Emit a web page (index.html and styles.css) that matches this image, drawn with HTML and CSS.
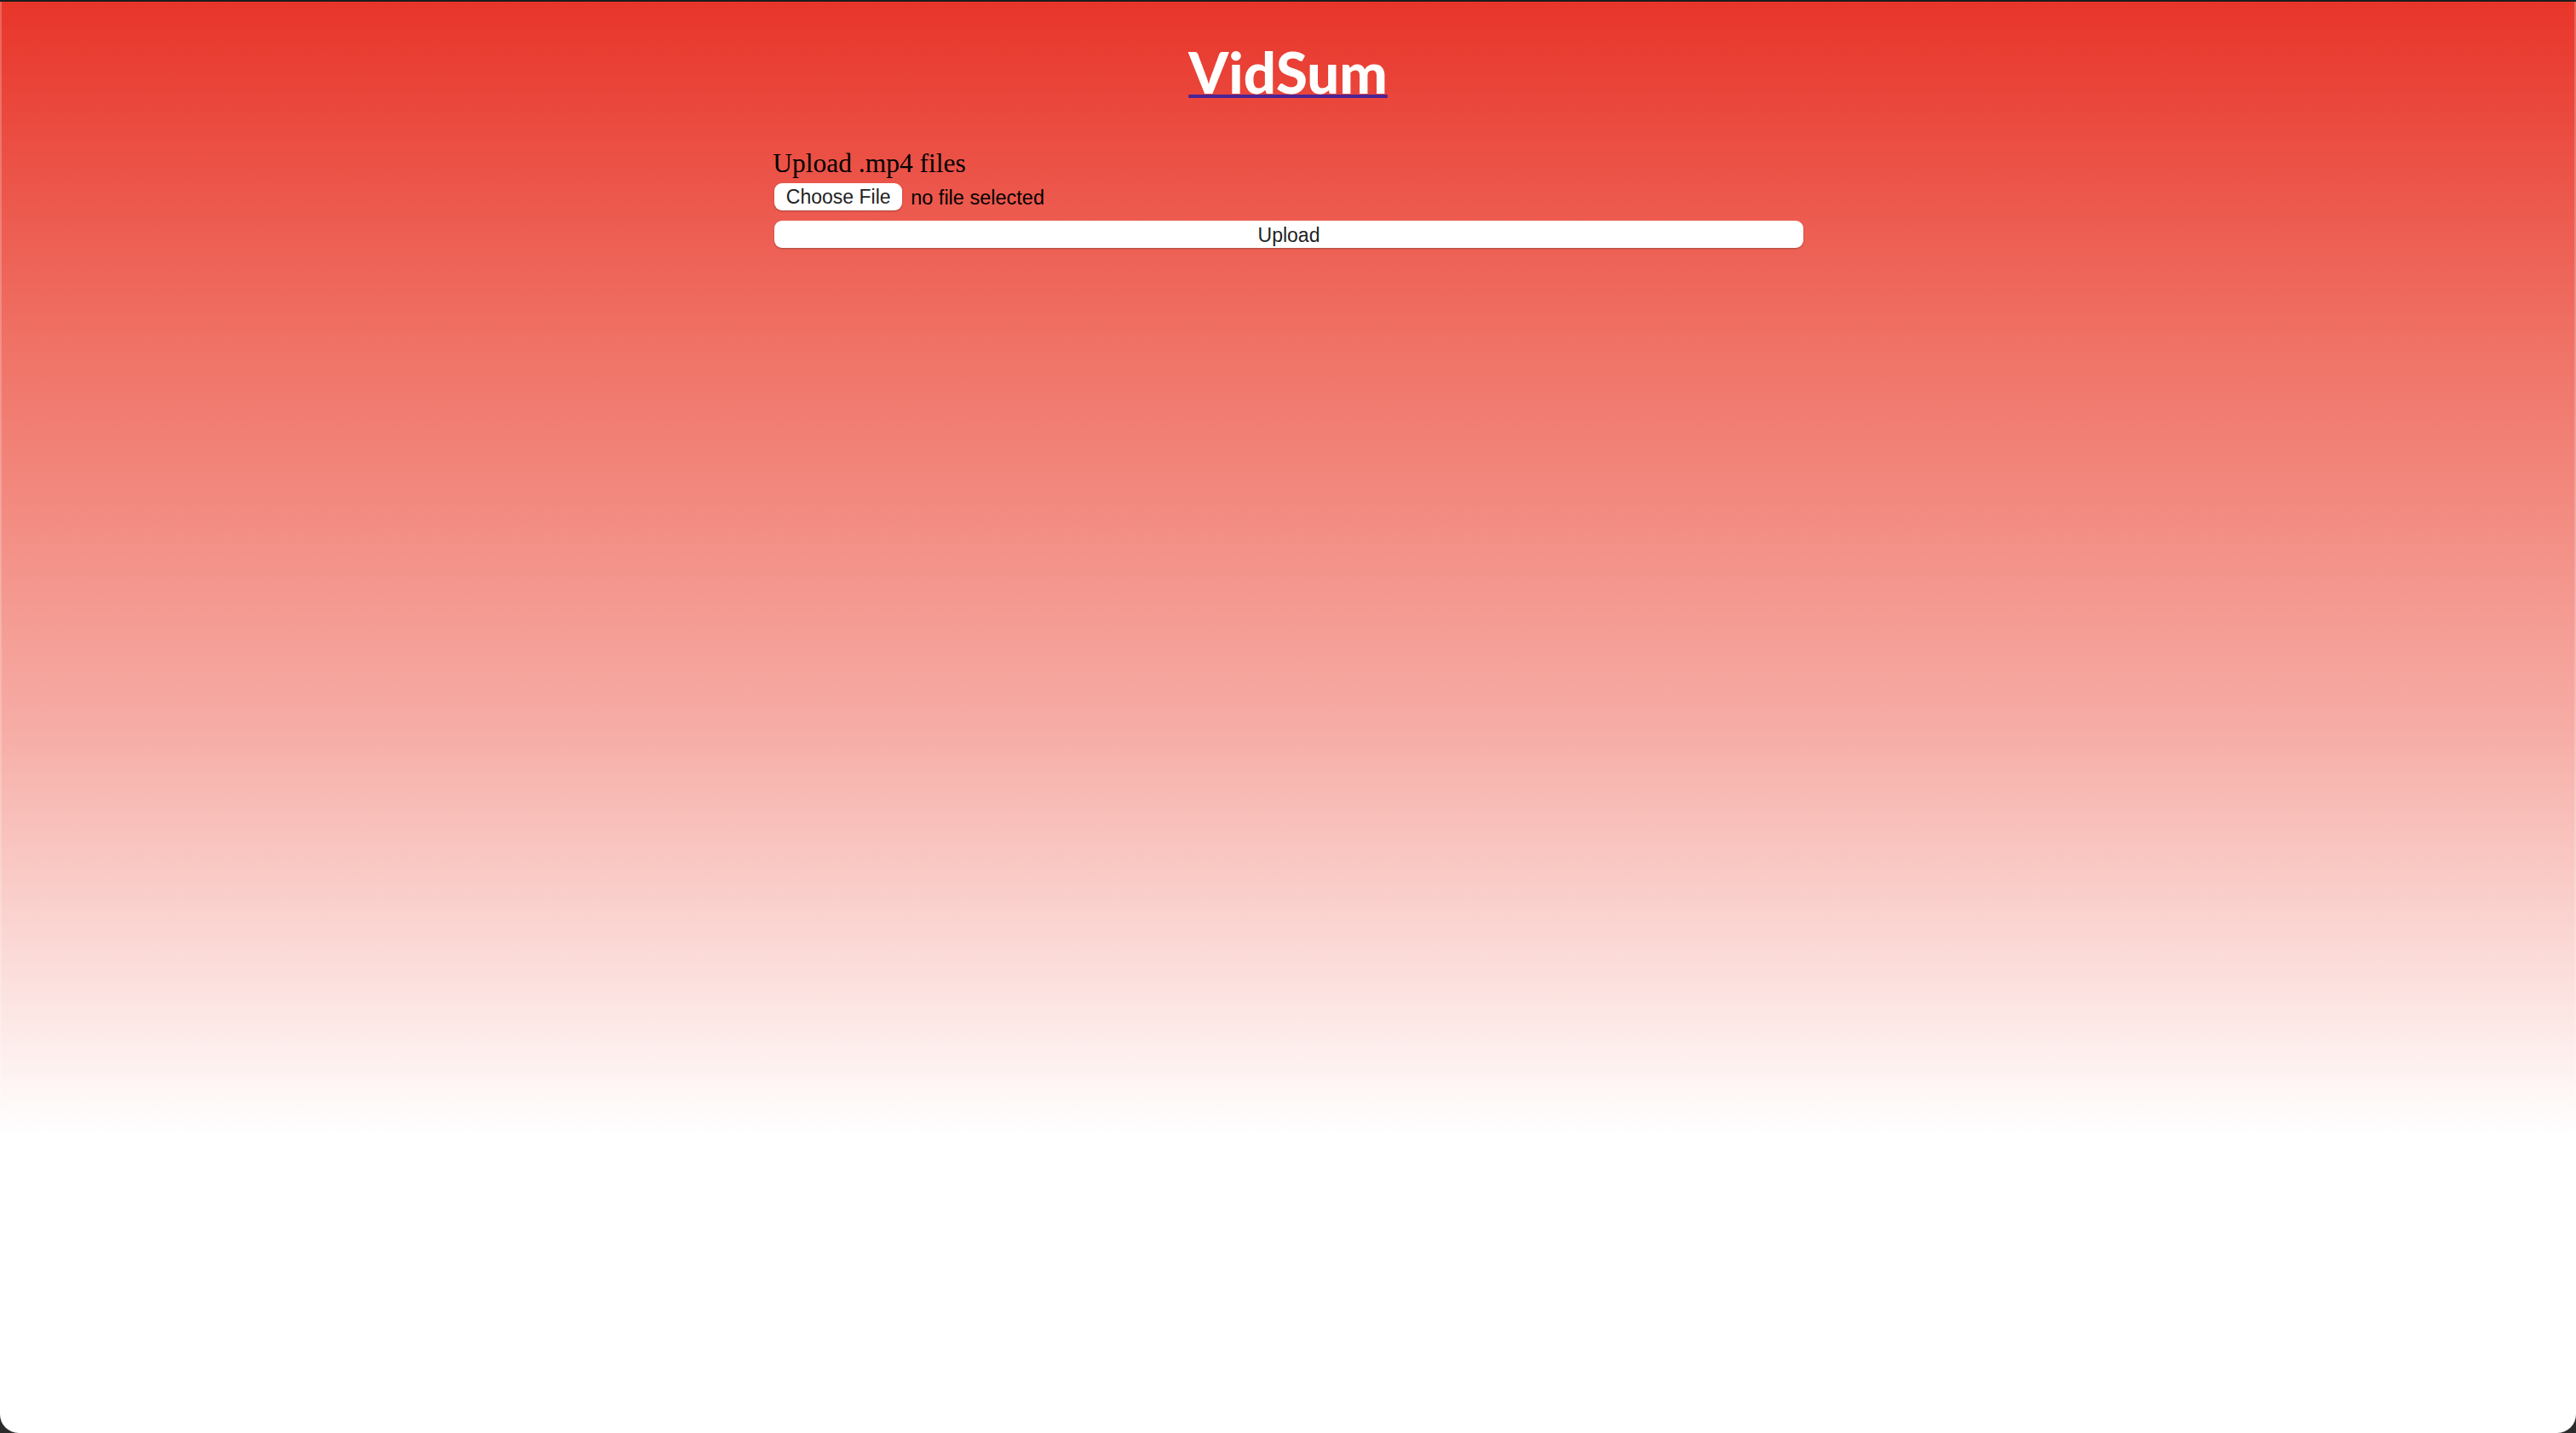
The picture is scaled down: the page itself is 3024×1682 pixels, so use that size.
FILE: index.html
```
<!DOCTYPE html>
<html>
<head>
<meta charset="utf-8">
<title>VidSum</title>
<link rel="stylesheet" href="styles.css">
</head>
<body>
<div class="window">
  <header class="header">
    <a class="brand" href="#">VidSum</a>
  </header>
  <form class="upload">
    <div class="label">Upload .mp4 files</div>
    <div class="file-row">
      <button type="button" class="choose">Choose File</button>
      <span class="status">no file selected</span>
    </div>
    <button type="button" class="submit">Upload</button>
  </form>
</div>
</body>
</html>
```
FILE: styles.css
```
html {
  background: #2b2b2b;
  height: 100%;
}
body {
  margin: 0;
  height: 100%;
}
.window {
  box-sizing: border-box;
  height: 100%;
  border-top: 2px solid #1c1c1c;
  border-radius: 0 0 22px 22px;
  background: linear-gradient(180deg, #e8352a 0px, #f07468 420px, #f6aca5 850px, #fff 1330px, #fff 100%);
  box-shadow: inset 2px 0 0 rgba(255,255,255,0.22), inset -2px 0 0 rgba(255,255,255,0.22);
  display: flex;
  flex-direction: column;
  align-items: center;
  padding-top: 42px;
}
.header {
  height: 80px;
  display: flex;
  justify-content: center;
}
.brand {
  font-family: Lato, "Noto Sans", sans-serif;
  font-weight: 900;
  font-size: 67px;
  line-height: 80px;
  color: #fff;
  text-decoration: underline;
  text-decoration-color: #4b2496;
  text-decoration-thickness: 4px;
  text-underline-offset: 1px;
}
.upload {
  width: 40%;
  margin-top: 50px;
  display: flex;
  flex-direction: column;
}
.label {
  font-family: "Liberation Serif", serif;
  font-size: 31.5px;
  line-height: 36px;
  color: #000;
}
.file-row {
  margin-top: 5px;
  display: flex;
  align-items: center;
  gap: 10px;
}
.choose {
  box-sizing: border-box;
  width: 150px;
  height: 32px;
  margin-left: 2px;
  border: none;
  border-radius: 9px;
  background: #fff;
  box-shadow: 0 1px 2px rgba(0,0,0,0.28);
  font-family: "Liberation Sans", Arial, sans-serif;
  font-size: 23px;
  color: #222;
  padding: 1px 0 0;
}
.status {
  font-family: "Liberation Sans", Arial, sans-serif;
  font-size: 23.5px;
  color: #000;
  padding-top: 2px;
}
.submit {
  box-sizing: border-box;
  margin: 12px 0 0 2px;
  height: 32px;
  border: none;
  border-radius: 9px;
  background: #fff;
  box-shadow: 0 1px 2px rgba(0,0,0,0.28);
  font-family: "Liberation Sans", Arial, sans-serif;
  font-size: 23px;
  color: #222;
  padding: 2px 0 0;
}
```
